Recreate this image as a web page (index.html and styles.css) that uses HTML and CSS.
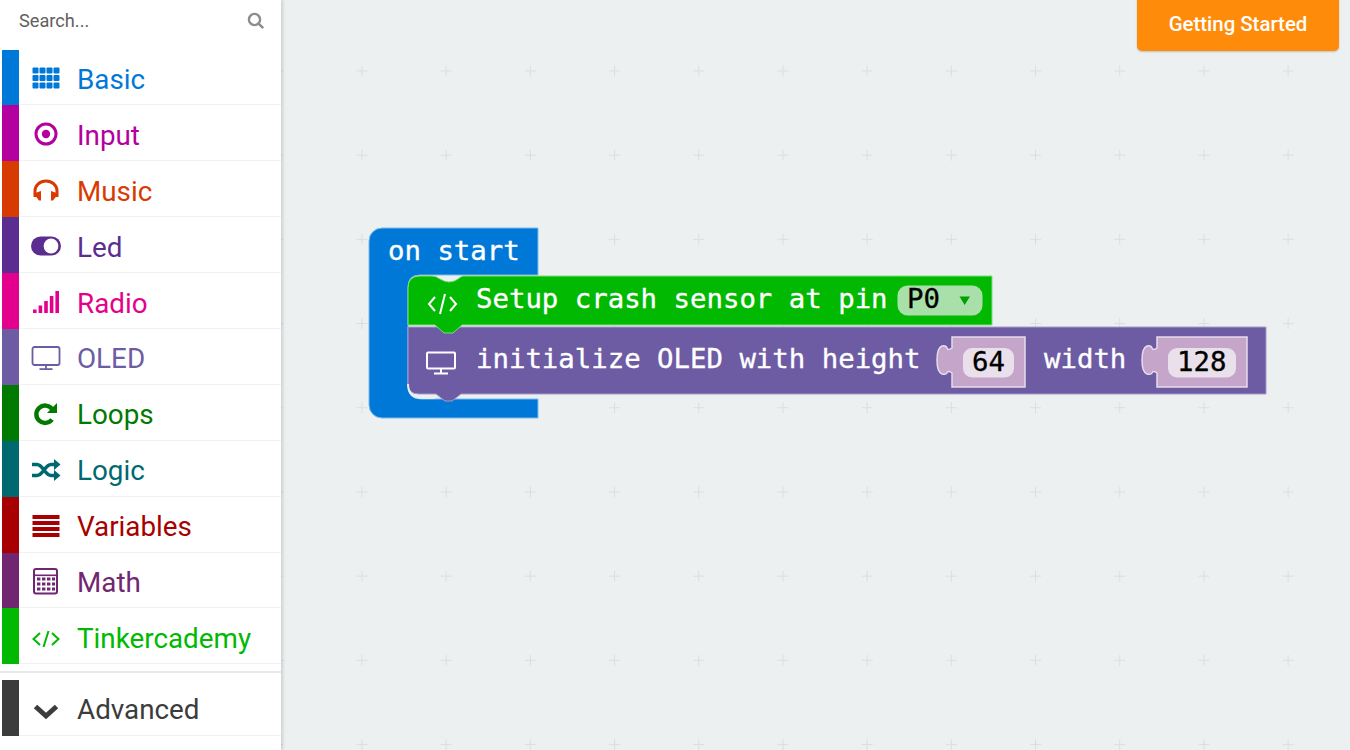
FILE: index.html
```html
<!DOCTYPE html>
<html lang="en">
<head>
  <meta charset="UTF-8" />
  <title>Blocks editor</title>
  <link rel="stylesheet" href="styles.css">
</head>
<body>
  <div class="sidebar">
    <div class="search">
      <span>Search...</span>
      <svg class="search-icon" width="18" height="18" viewBox="0 0 18 18"><circle cx="7.5" cy="7.5" r="5.6"/><path d="M11.6 11.6 L16.2 16.2"/></svg>
    </div>

    <div class="cat cat-basic">
      <div class="bar"></div>
      <div class="icon"><svg width="30" height="24" viewBox="0 0 30 24" fill="currentColor">
        <rect x="1.5" y="1.5" width="6" height="6" rx="1"/><rect x="8.5" y="1.5" width="6" height="6" rx="1"/><rect x="15.5" y="1.5" width="6" height="6" rx="1"/><rect x="22.5" y="1.5" width="6" height="6" rx="1"/>
        <rect x="1.5" y="9" width="6" height="6" rx="1"/><rect x="8.5" y="9" width="6" height="6" rx="1"/><rect x="15.5" y="9" width="6" height="6" rx="1"/><rect x="22.5" y="9" width="6" height="6" rx="1"/>
        <rect x="1.5" y="16.5" width="6" height="6" rx="1"/><rect x="8.5" y="16.5" width="6" height="6" rx="1"/><rect x="15.5" y="16.5" width="6" height="6" rx="1"/><rect x="22.5" y="16.5" width="6" height="6" rx="1"/>
      </svg></div>
      <span>Basic</span>
    </div>
    <div class="cat cat-input">
      <div class="bar"></div>
      <div class="icon"><svg width="30" height="24" viewBox="0 0 30 24"><circle cx="15" cy="12" r="10" fill="none" stroke="currentColor" stroke-width="3"/><circle cx="15" cy="12" r="4.2" fill="currentColor"/></svg></div>
      <span>Input</span>
    </div>
    <div class="cat cat-music">
      <div class="bar"></div>
      <div class="icon"><svg width="30" height="24" viewBox="0 0 30 24"><path d="M4 19 V13 A11 10 0 0 1 26 13 V19" fill="none" stroke="currentColor" stroke-width="3"/><path d="M2.6 15.5 L10 13 V22.5 H8 Z M27.4 15.5 L20 13 V22.5 H22 Z" fill="currentColor"/></svg></div>
      <span>Music</span>
    </div>
    <div class="cat cat-led">
      <div class="bar"></div>
      <div class="icon"><svg width="32" height="24" viewBox="0 0 32 24"><rect x="1" y="2.5" width="30" height="19" rx="9.5" fill="currentColor"/><circle cx="21" cy="12" r="7.4" fill="#fff"/></svg></div>
      <span>Led</span>
    </div>
    <div class="cat cat-radio">
      <div class="bar"></div>
      <div class="icon"><svg width="30" height="24" viewBox="0 0 30 24" fill="currentColor"><rect x="2" y="19.5" width="3.6" height="3.5"/><rect x="7.6" y="15.5" width="3.6" height="7.5"/><rect x="13.2" y="11" width="3.6" height="12"/><rect x="18.8" y="6" width="3.6" height="17"/><rect x="24.4" y="1" width="3.6" height="22"/></svg></div>
      <span>Radio</span>
    </div>
    <div class="cat cat-oled">
      <div class="bar"></div>
      <div class="icon"><svg width="30" height="26" viewBox="0 0 30 26" fill="none" stroke="currentColor"><rect x="1.5" y="2" width="27" height="18" rx="2" stroke-width="1.8"/><path d="M15 20 V24 M8.5 24.2 H21.5" stroke-width="1.8"/></svg></div>
      <span>OLED</span>
    </div>
    <div class="cat cat-loops">
      <div class="bar"></div>
      <div class="icon"><svg width="30" height="24" viewBox="0 0 30 24"><path d="M21 7 A8.7 8.7 0 1 0 21 17.5" fill="none" stroke="currentColor" stroke-width="4.4"/><path d="M26 1 V11 H16 Z" fill="currentColor"/></svg></div>
      <span>Loops</span>
    </div>
    <div class="cat cat-logic">
      <div class="bar"></div>
      <div class="icon"><svg width="30" height="24" viewBox="0 0 30 24"><path d="M1 6.5 H6 C12 6.5 14 17.5 20 17.5 H25 M1 17.5 H6 C12 17.5 14 6.5 20 6.5 H25" fill="none" stroke="currentColor" stroke-width="3.4"/><path d="M23 1 L29.5 6.5 L23 12 Z M23 12 L29.5 17.5 L23 23 Z" fill="currentColor"/></svg></div>
      <span>Logic</span>
    </div>
    <div class="cat cat-variables">
      <div class="bar"></div>
      <div class="icon"><svg width="30" height="24" viewBox="0 0 30 24" fill="currentColor"><rect x="1.5" y="1" width="27" height="4"/><rect x="1.5" y="7" width="27" height="4"/><rect x="1.5" y="13" width="27" height="4"/><rect x="1.5" y="19" width="27" height="4"/></svg></div>
      <span>Variables</span>
    </div>
    <div class="cat cat-math">
      <div class="bar"></div>
      <div class="icon"><svg width="30" height="30" viewBox="0 0 30 30" fill="currentColor">
        <rect x="3" y="3" width="23" height="24.5" rx="2" fill="none" stroke="currentColor" stroke-width="2"/>
        <rect x="3" y="8.5" width="23" height="1.6"/>
        <rect x="6" y="11.5" width="3.4" height="3"/><rect x="11" y="11.5" width="3.4" height="3"/><rect x="16" y="11.5" width="3.4" height="3"/><rect x="21" y="11.5" width="3" height="3"/>
        <rect x="6" y="16.5" width="3.4" height="3"/><rect x="11" y="16.5" width="3.4" height="3"/><rect x="16" y="16.5" width="3.4" height="3"/><rect x="21" y="16.5" width="3" height="3"/>
        <rect x="6" y="21.5" width="3.4" height="3"/><rect x="11" y="21.5" width="3.4" height="3"/><rect x="16" y="21.5" width="3.4" height="3"/><rect x="21" y="21.5" width="3" height="3"/>
      </svg></div>
      <span>Math</span>
    </div>
    <div class="cat cat-tinker">
      <div class="bar"></div>
      <div class="icon"><svg width="30" height="24" viewBox="0 0 30 24" fill="none" stroke="currentColor" stroke-width="2"><path d="M9 8 L2.5 14 L9 20 M21 8 L27.5 14 L21 20 M17.5 6 L12.5 22"/></svg></div>
      <span>Tinkercademy</span>
    </div>

    <div class="advanced-gap"></div>

    <div class="cat cat-advanced">
      <div class="bar"></div>
      <div class="icon"><svg width="30" height="24" viewBox="0 0 30 24" fill="none" stroke="currentColor" stroke-width="5"><path d="M4.5 9.5 L15 19 L25.5 9.5"/></svg></div>
      <span>Advanced</span>
    </div>
  </div>

  <div class="workspace">
    <svg class="canvas" width="1069" height="750" viewBox="281 0 1069 750">
      <defs>
        <pattern id="grid" x="356.5" y="65.5" width="84.2" height="84.2" patternUnits="userSpaceOnUse">
          <path d="M0 5.5 H11 M5.5 0 V11" stroke="#dadee1" stroke-width="1" fill="none"/>
        </pattern>
      </defs>
      <rect x="281" y="0" width="1069" height="750" fill="url(#grid)"/>

      <!-- on start -->
      <path class="blk-blue" d="M382 228 H538 V275 H420 Q408 275 408 287 V386 Q408 399 421 399 H538 V418 H382 A13 13 0 0 1 369 405 V241 A13 13 0 0 1 382 228 Z"/>
      <text class="blk-text" x="388" y="260">on start</text>

      <!-- initialize OLED -->
      <path class="blk-purple" d="M408 327 H1266 V394 H461 L452 401 H445 L436 394 H419 Q408 394 408 384 Z"/>
      <path class="blk-edge" d="M408 384 Q408 397 421 398 H435"/>
      <path d="M428 352.5 H454 Q455 352.5 455 353.5 V367.5 Q455 368.5 454 368.5 H428 Q427 368.5 427 367.5 V353.5 Q427 352.5 428 352.5 Z M441 369 V373 M434 373.5 H448" fill="none" stroke="#fff" stroke-width="2"/>
      <text class="blk-text" x="476" y="368">initialize OLED with height</text>

      <path class="shadow-blk" d="M952 337 H1025 V387 H952 V373 Q948 370 947 373 Q946 375 942 374 Q937 372 937 360 Q937 348 942 346 Q946 345 947 348 Q948 351 952 348 Z"/>
      <rect class="field-light" x="963" y="348" width="51" height="29.5" rx="9"/>
      <text class="blk-text field-text" x="972" y="371">64</text>

      <text class="blk-text" x="1044" y="368">width</text>

      <path class="shadow-blk" d="M1157 337 H1247 V387 H1157 V373 Q1153 370 1152 373 Q1151 375 1147 374 Q1142 372 1142 360 Q1142 348 1147 346 Q1151 345 1152 348 Q1153 351 1157 348 Z"/>
      <rect class="field-light" x="1168" y="348" width="68" height="29.5" rx="9"/>
      <text class="blk-text field-text" x="1177" y="371">128</text>

      <!-- setup crash sensor -->
      <path class="blk-green" d="M420 276 H432 Q436 276 440 279 Q445 282 449 282 Q454 282 458 279 Q460 277 463 276 H992 V325 H462 L453 333 H444 L435 325 H408 V288 Q408 276 420 276 Z"/>
      <path d="M435 297 L429 304 L435 311 M450 297 L456 304 L450 311 M445 294 L440 314" fill="none" stroke="#fff" stroke-width="2"/>
      <text class="blk-text" x="476" y="308">Setup crash sensor at pin</text>
      <rect class="field-green" x="897.5" y="285.5" width="85" height="30" rx="10"/>
      <text class="blk-text field-text" x="907" y="308">P0</text>
      <path d="M959.5 296.5 H970 L964.7 305 Z" fill="#00a000"/>
    </svg>

    <button class="start-btn">Getting Started</button>
  </div>
</body>
</html>
```

FILE: styles.css
```css
html, body {
  margin: 0;
  height: 100%;
  overflow: hidden;
}
body {
  display: flex;
  font-family: Roboto, "Liberation Sans", sans-serif;
  background: #ecf0f1;
}

/* Toolbox */
.sidebar {
  position: relative;
  z-index: 2;
  width: 281px;
  flex: none;
  padding-left: 2px;
  box-sizing: border-box;
  background: white;
  box-shadow: 2px 0 3px rgba(0, 0, 0, 0.13);
}
.search {
  height: 49.5px;
  padding: 0 16px 8px 17px;
  box-sizing: border-box;
  display: flex;
  align-items: center;
  justify-content: space-between;
  font-size: 18.2px;
  color: #5f5f5f;
}
.search-icon {
  fill: none;
  stroke: #8c8c8c;
  stroke-width: 2.4;
}
.cat {
  height: 55.9px;
  padding-top: 3px;
  box-sizing: border-box;
  display: flex;
  align-items: center;
  font-size: 27.8px;
  color: var(--cat);
  border-bottom: 1px solid #f0f2f3;
}
.cat span {
  margin-top: 2px;
}
.bar {
  width: 17px;
  align-self: stretch;
  margin-top: -3px;
  margin-bottom: -1px;
  background: var(--cat);
}
.icon {
  width: 54px;
  margin-right: 4px;
  display: flex;
  justify-content: center;
  align-items: center;
}
.cat-basic { --cat: #0078d7; }
.cat-input { --cat: #b4009e; }
.cat-music { --cat: #d83b01; }
.cat-led { --cat: #5c2d91; }
.cat-radio { --cat: #e3008c; }
.cat-oled { --cat: #6d5ba4; }
.cat-loops { --cat: #007a00; }
.cat-logic { --cat: #006970; }
.cat-variables { --cat: #a80000; }
.cat-math { --cat: #712672; }
.cat-tinker { --cat: #00b900; }
.cat-advanced { --cat: #3c3c3c; }
.advanced-gap {
  height: 15.5px;
  margin-left: -2px;
  position: relative;
}
.advanced-gap::after {
  content: "";
  position: absolute;
  left: 0;
  right: 0;
  top: 7px;
  height: 2px;
  background: #e8ebec;
}

/* Blocks area */
.workspace {
  position: relative;
  flex: 1;
  background: #ecf0f1;
}
.canvas {
  display: block;
}
.blk-text {
  font-family: "DejaVu Sans Mono", "Liberation Mono", monospace;
  font-size: 27.35px;
  fill: white;
  stroke: white;
  stroke-width: 0.35;
}
.field-text {
  fill: black;
  stroke: black;
}
.blk-blue {
  fill: #0078d7;
  stroke: #7fb9e8;
  stroke-width: 1;
}
.blk-green {
  fill: #00b900;
  stroke: #7fdc7f;
  stroke-width: 1;
}
.blk-purple {
  fill: #6d5ba4;
  stroke: #a79dc9;
  stroke-width: 1;
}
.blk-edge {
  fill: none;
  stroke: #e9ecf5;
  stroke-width: 2;
}
.shadow-blk {
  fill: #c5a5c9;
  stroke: #e6dcec;
  stroke-width: 1.5;
}
.field-light {
  fill: #e9e0eb;
}
.field-green {
  fill: #a9e0a9;
}
.start-btn {
  position: absolute;
  top: -5px;
  right: 11px;
  width: 202px;
  height: 56px;
  padding: 1px 0 0;
  border: none;
  border-radius: 5px;
  background-color: #ff8b0a;
  color: white;
  font-family: Roboto, sans-serif;
  font-size: 20.4px;
  font-weight: 500;
  box-shadow: 0 1px 2px rgba(0, 0, 0, 0.2);
}
```
